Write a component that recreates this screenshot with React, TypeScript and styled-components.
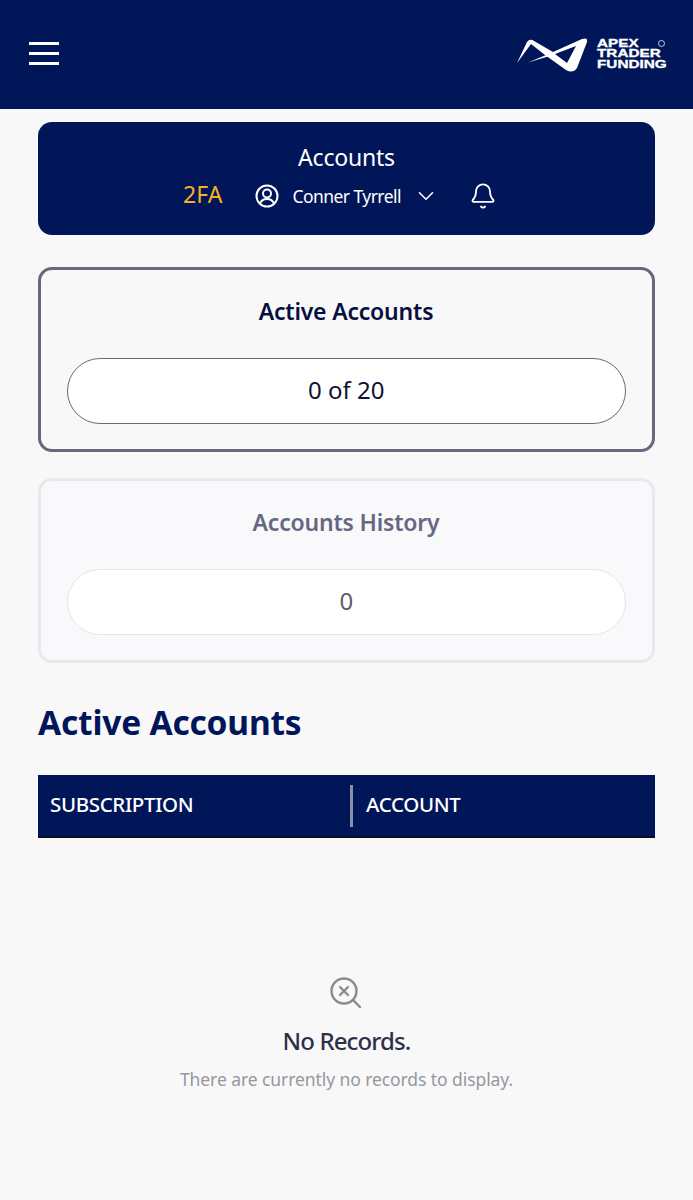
import styled, { createGlobalStyle } from 'styled-components';
import { ChevronDown, Bell } from 'lucide-react';

const GlobalStyle = createGlobalStyle`
  * {
    box-sizing: border-box;
  }
  body {
    margin: 0;
    background: #f8f8f9;
    font-family: 'Noto Sans', sans-serif;
  }
`;

const Page = styled.div`
  width: 693px;
  height: 1200px;
  overflow: hidden;
  background: #f8f8f9;
`;

const TopBar = styled.header`
  height: 109px;
  background: #011659;
  display: flex;
  align-items: center;
  justify-content: space-between;
  padding: 0 26px 2px 29px;
`;

const Burger = styled.button`
  display: flex;
  flex-direction: column;
  gap: 7px;
  width: 30px;
  padding: 0;
  background: none;
  border: none;
`;

const BurgerLine = styled.span`
  display: block;
  height: 3px;
  background: #ffffff;
`;

const Logo = styled.div`
  display: flex;
  align-items: center;
  gap: 2px;
  position: relative;
`;

const LogoText = styled.div`
  font-family: 'Liberation Sans', sans-serif;
  font-weight: 700;
  font-size: 11px;
  line-height: 10.2px;
  color: #ffffff;
  transform: scaleX(1.39);
  transform-origin: left center;
  width: 70px;
  white-space: nowrap;
  -webkit-text-stroke: 0.3px #ffffff;
`;

const LogoBadge = styled.span`
  position: absolute;
  top: 10px;
  right: 2px;
  width: 7px;
  height: 7px;
  border: 1px solid #c9cfe0;
  border-radius: 50%;
`;

const Content = styled.main`
  padding: 13px 38px 0;
`;

const Hero = styled.section`
  height: 113px;
  background: #011659;
  border-radius: 14px;
  color: #ffffff;
  display: flex;
  flex-direction: column;
  align-items: center;
  padding-top: 20px;
`;

const HeroTitle = styled.h1`
  margin: 0;
  font-size: 23px;
  line-height: 30px;
  font-weight: 400;
  letter-spacing: -0.2px;
`;

const HeroRow = styled.div`
  display: flex;
  align-items: center;
  margin-top: 8px;
  height: 32px;
`;

const TwoFactor = styled.span`
  color: #f4b223;
  font-size: 23px;
  margin: 0 33px 4px 0;
`;

const UserName = styled.span`
  font-size: 17.5px;
  letter-spacing: -0.55px;
  margin: 0 12px 0 13px;
`;

const BellWrap = styled.span`
  display: flex;
  margin: 0 13px 0 30px;
`;

const StatCard = styled.section<{ $muted?: boolean }>`
  height: 185px;
  margin-top: ${(p) => (p.$muted ? '26px' : '32px')};
  padding: 25px 26px 0;
  border: 3px solid ${(p) => (p.$muted ? '#e8e9ee' : '#666880')};
  border-radius: 14px;
  background: ${(p) => (p.$muted ? '#f9f9fb' : '#f8f8f9')};
  text-align: center;
`;

const StatTitle = styled.h2<{ $muted?: boolean }>`
  margin: 0 0 0 -1px;
  font-size: 23px;
  line-height: 32px;
  font-weight: 600;
  letter-spacing: -0.2px;
  color: ${(p) => (p.$muted ? '#666880' : '#070f3f')};
`;

const StatPill = styled.div<{ $muted?: boolean }>`
  height: 66px;
  margin: 31px 0 0 -0.5px;
  padding-bottom: 3px;
  border: 1.5px solid ${(p) => (p.$muted ? '#e4e5ea' : '#666880')};
  border-radius: 33px;
  background: #ffffff;
  display: flex;
  align-items: center;
  justify-content: center;
  font-size: 24px;
  color: ${(p) => (p.$muted ? '#5a5d70' : '#0c1233')};
`;

const SectionTitle = styled.h2`
  margin: 37px 0 0;
  font-size: 33.5px;
  line-height: 44px;
  font-weight: 700;
  letter-spacing: -0.2px;
  color: #011659;
`;

const TableHead = styled.div`
  height: 63px;
  margin-top: 31px;
  display: grid;
  grid-template-columns: 312px 1fr;
  align-items: center;
  background: #011659;
  border-bottom: 2px solid #0a0f24;
  color: #ffffff;
  font-size: 20.5px;
  font-weight: 500;
`;

const HeadCell = styled.div<{ $divided?: boolean }>`
  height: 42px;
  display: flex;
  align-items: center;
  padding: 0 0 3px ${(p) => (p.$divided ? '13px' : '12px')};
  border-left: ${(p) => (p.$divided ? '3px solid #8a90a8' : 'none')};
  letter-spacing: -0.35px;
`;

const Empty = styled.div`
  margin-top: 138px;
  display: flex;
  flex-direction: column;
  align-items: center;
`;

const EmptyTitle = styled.div`
  margin-top: 14px;
  font-size: 24px;
  line-height: 34px;
  font-weight: 500;
  letter-spacing: -0.9px;
  color: #2e3048;
`;

const EmptyText = styled.div`
  margin-top: 9px;
  font-size: 17.5px;
  line-height: 24px;
  letter-spacing: -0.08px;
  color: #96979d;
`;

function LogoMark() {
  return (
    <svg width="85" height="48" viewBox="0 0 85 48">
      <path
        fillRule="evenodd"
        d="M7 33 L17 12 Q20 8 24 11 L43 22 L72 9 Q78 7 77 12 L67 38 Q63 44 56 40 L35 25 L21 14 Z M45 24 L57 33 L66 16 Z"
        fill="#ffffff"
      />
      <path d="M18 32.5 L41 23 L43 25 Z" fill="#ffffff" />
    </svg>
  );
}

function UserIcon() {
  return (
    <svg width="24" height="24" viewBox="0 0 24 24" fill="none" stroke="#ffffff" strokeWidth="2">
      <circle cx="12" cy="12" r="10.5" />
      <circle cx="12" cy="9.5" r="4" />
      <path d="M5 19.5 C6.5 15.5 9 15 12 15 C15 15 17.5 15.5 19 19.5" />
    </svg>
  );
}

function NoRecordsIcon() {
  return (
    <svg width="34" height="34" viewBox="1 0 34 34" fill="none" stroke="#8a8b90" strokeWidth="2.4">
      <circle cx="15" cy="15" r="12.5" />
      <path d="M24 24 L31 31" strokeLinecap="round" />
      <path d="M11 11 L19 19 M19 11 L11 19" strokeLinecap="round" />
    </svg>
  );
}

export default function App() {
  return (
    <Page>
      <GlobalStyle />
      <TopBar>
        <Burger aria-label="Menu">
          <BurgerLine />
          <BurgerLine />
          <BurgerLine />
        </Burger>
        <Logo>
          <LogoMark />
          <LogoText>
            APEX
            <br />
            TRADER
            <br />
            FUNDING
          </LogoText>
          <LogoBadge />
        </Logo>
      </TopBar>
      <Content>
        <Hero>
          <HeroTitle>Accounts</HeroTitle>
          <HeroRow>
            <TwoFactor>2FA</TwoFactor>
            <UserIcon />
            <UserName>Conner Tyrrell</UserName>
            <ChevronDown size={26} color="#ffffff" strokeWidth={1.4} />
            <BellWrap>
              <Bell size={28} color="#ffffff" strokeWidth={1.6} />
            </BellWrap>
          </HeroRow>
        </Hero>
        <StatCard>
          <StatTitle>Active Accounts</StatTitle>
          <StatPill>0 of 20</StatPill>
        </StatCard>
        <StatCard $muted>
          <StatTitle $muted>Accounts History</StatTitle>
          <StatPill $muted>0</StatPill>
        </StatCard>
        <SectionTitle>Active Accounts</SectionTitle>
        <TableHead>
          <HeadCell>SUBSCRIPTION</HeadCell>
          <HeadCell $divided>ACCOUNT</HeadCell>
        </TableHead>
        <Empty>
          <NoRecordsIcon />
          <EmptyTitle>No Records.</EmptyTitle>
          <EmptyText>There are currently no records to display.</EmptyText>
        </Empty>
      </Content>
    </Page>
  );
}
